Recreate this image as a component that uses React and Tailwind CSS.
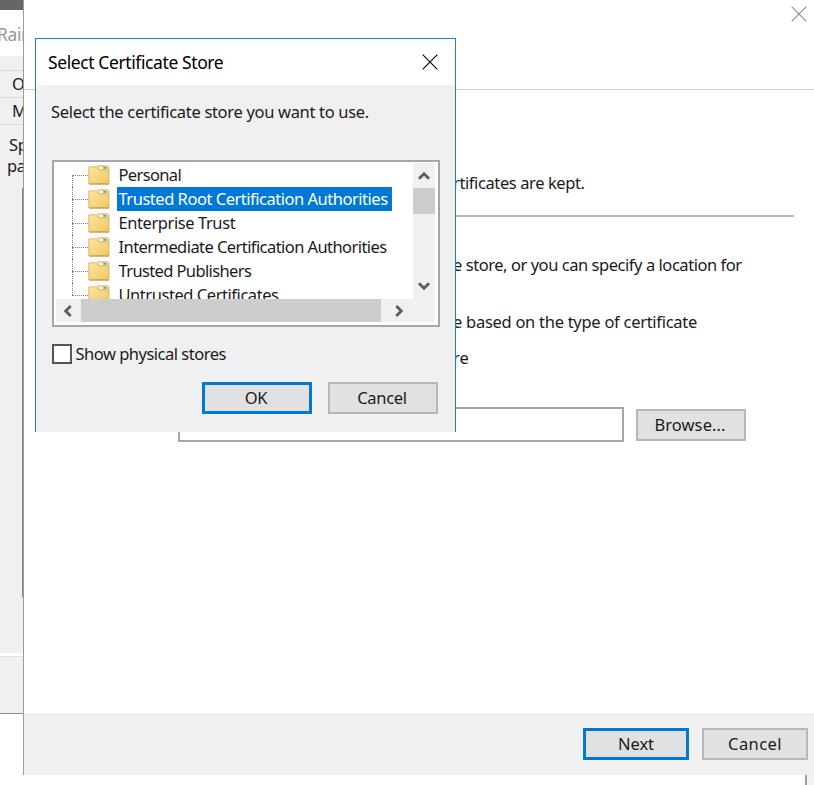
import clsx from 'clsx';

const stores = [
    { name: 'Personal', tracking: 'tracking-[-0.65px]' },
    { name: 'Trusted Root Certification Authorities', tracking: 'tracking-[-0.48px]', selected: true },
    { name: 'Enterprise Trust', tracking: 'tracking-[-0.42px]' },
    { name: 'Intermediate Certification Authorities', tracking: 'tracking-[-0.57px]' },
    { name: 'Trusted Publishers', tracking: 'tracking-[-0.62px]' },
    { name: 'Untrusted Certificates', tracking: 'tracking-[-0.45px]' },
];

const CloseIcon = ({ className }) => (
    <svg className={className} width="16" height="16" viewBox="0 0 16 16" fill="none" stroke="currentColor" strokeWidth="1.1">
        <path d="M0.7 0.7L15.3 15.3M15.3 0.7L0.7 15.3" />
    </svg>
);

const Chevron = ({ className }) => (
    <svg className={clsx('shrink-0', className)} width="12" height="12" viewBox="0 0 12 12" fill="none" stroke="#5c5c5c" strokeWidth="2.8">
        <path d="M1 8.7L6 3.7L11 8.7" />
    </svg>
);

const FolderIcon = () => (
    <svg className="shrink-0" width="22" height="20" viewBox="0 0 22 20">
        <defs>
            <linearGradient id="folder" x1="0" y1="0" x2="1" y2="1">
                <stop offset="0" stopColor="#ffe6a0" />
                <stop offset="1" stopColor="#efc665" />
            </linearGradient>
        </defs>
        <path d="M0.8 2.4Q0.8 1.8 1.4 1.8H8.8L10 0.8H19Q21 0.8 21 2.6V18.4Q21 19 20.4 19H1.4Q0.8 19 0.8 18.4Z" fill="url(#folder)" stroke="#d2ae5c" strokeWidth="0.8" />
        <path d="M12 2H19V3.8H12Z" fill="#fff" />
        <path d="M15.2 2H18.6V3.8H15.2Z" fill="#4a9bd4" />
        <path d="M8.6 2.6L11 5H20.6" fill="none" stroke="#d2ae5c" strokeWidth="0.8" />
        <path d="M1 19H21" stroke="#b98d35" strokeWidth="0.9" />
    </svg>
);

const Button = ({ children, primary, className }) => (
    <button
        className={clsx(
            'flex items-center justify-center bg-[#e1e1e1] pt-px text-[16.5px] leading-none',
            primary ? 'border-[3px] border-[#0078d7]' : 'border-2 border-[#b7b7b7]',
            className
        )}
    >
        {children}
    </button>
);

const BackWindow = () => (
    <div className="w-[23px] shrink-0 overflow-hidden whitespace-nowrap">
        <div className="h-2.5 bg-[#666666]" />
        <div className="h-[46px] bg-white pt-3 text-[17.5px] leading-6 text-[#999999]">
            <span className="-ml-[3px] tracking-[-0.4px]">Rain</span>
        </div>
        <div className="h-[15px] border-b border-[#d9d9d9] bg-[#f0f0f0]" />
        <div className="h-[27px] border-b border-[#d9d9d9] bg-[#f0f0f0] pl-3 text-[16.5px] leading-[26px]">O</div>
        <div className="h-[27px] border-b border-[#dcdcdc] bg-[#f0f0f0] pl-3 text-[16.5px] leading-[25px]">M</div>
        <div className="h-[63px] bg-[#f0f0f0] pt-[9px] text-[16.5px] leading-[22px] tracking-[-0.3px]">
            <p className="pl-[9px]">Sp</p>
            <p className="-mt-px pl-[7px]">pa</p>
        </div>
        <div className="h-[409px] border-r border-[#85858d] bg-[#f0f0f0]" />
        <div className="h-[56px] bg-[#f0f0f0]" />
        <div className="h-[3px] bg-white" />
        <div className="h-[58px] border-t border-b border-t-[#dfdfdf] border-b-[#8c8c8c] bg-[#f0f0f0]" />
    </div>
);

const Wizard = () => (
    <div className="flex flex-1 flex-col">
        <div className="flex h-[775px] flex-col border-l border-[#9b9b9b] bg-white">
            <header className="flex h-[90px] shrink-0 justify-end border-b border-[#cfcfcf] pt-[6px] pr-[7px]">
                <CloseIcon className="text-[#8a8a8a]" />
            </header>

            <main className="flex-1 pl-[429px] text-[16.5px] leading-6 whitespace-nowrap">
                <p className="mt-[81px] tracking-[-0.4px]">rtificates are kept.</p>
                <div className="mt-[19.5px] mr-5 h-[2px] bg-[#b9b9b9]" />
                <p className="mt-[36px] tracking-[-0.45px]">e store, or you can specify a location for</p>
                <p className="mt-[33px] tracking-[-0.28px]">e based on the type of certificate</p>
                <p className="mt-3 tracking-[-0.1px]">re</p>
                <div className="mt-[37px] -ml-[275px] flex gap-3">
                    <input type="text" className="h-[35px] w-[446px] border-2 border-[#a6a6a6] bg-white outline-none" />
                    <Button className="mt-[2px] h-[32px] w-[110px] pr-0.5 tracking-[0.1px]">Browse...</Button>
                </div>
            </main>

            <footer className="flex h-[61px] shrink-0 justify-end gap-[13px] border-t border-[#dfdfdf] bg-[#f0f0f0] pt-[13px] pr-[6px]">
                <Button primary className="h-[32px] w-[106px] tracking-[-0.1px]">Next</Button>
                <Button className="h-[32px] w-[106px] tracking-[0.4px]">Cancel</Button>
            </footer>
        </div>
        <div className="flex h-2.5 justify-end">
            <div className="w-[9px] border-l-2 border-[#9a9fa5] bg-[#f3f3f3]" />
        </div>
    </div>
);

const StoreList = () => (
    <div className="h-[167px] w-[388px] border-2 border-[#a3a6ac] bg-white pl-[2px]">
        <div className="flex h-[137px]">
            <ul className="w-[357px] overflow-hidden pt-px">
                {stores.map((store, i) => (
                    <li key={store.name} className="flex h-6 items-center pl-4">
                        {/* Tree lines */}
                        <div className={clsx('flex w-4 flex-col', i === 0 ? 'h-3 self-end' : 'h-6')}>
                            <div className={clsx('border-l border-dotted border-[#808080]', i === 0 ? 'h-0' : 'h-3')} />
                            <div className={clsx('flex-1 border-t border-dotted border-[#808080]', i < stores.length - 1 && 'border-l')} />
                        </div>
                        <FolderIcon />
                        <span
                            className={clsx(
                                'ml-[7px] h-6 pr-1 pl-[1.5px] text-[16.5px] leading-6 whitespace-nowrap',
                                store.tracking,
                                store.selected && 'bg-[#0078d7] text-white'
                            )}
                        >
                            {store.name}
                        </span>
                    </li>
                ))}
            </ul>
            <div className="mt-px flex w-[22px] flex-col items-center bg-[#f0f0f0]">
                <Chevron className="mt-[7px] mb-[6px]" />
                <div className="h-[26px] w-full bg-[#cdcdcd]" />
                <Chevron className="mt-auto mb-[7px] rotate-180" />
            </div>
        </div>
        <div className="flex h-[23px] w-[379px] items-center bg-[#f0f0f0]">
            <Chevron className="mr-[7px] ml-[6px] -rotate-90" />
            <div className="h-full w-[300px] bg-[#cdcdcd]" />
            <Chevron className="ml-3 rotate-90" />
        </div>
    </div>
);

const StoreDialog = () => (
    <div className="absolute top-[38px] left-[35px] h-[394px] w-[421px] border border-b-0 border-[#1a7fd0] bg-[#f0f0f0]">
        <div className="flex h-[46px] items-center justify-between bg-white pr-[17px] pl-3">
            <h1 className="text-[17.5px] leading-6 tracking-[-0.4px] text-black">Select Certificate Store</h1>
            <CloseIcon className="text-black" />
        </div>
        <div className="pl-4">
            <p className="-ml-px pt-[15px] text-[16.5px] leading-6 tracking-[-0.32px]">Select the certificate store you want to use.</p>
            <div className="mt-[36px]">
                <StoreList />
            </div>
            <label className="mt-[15px] flex items-center gap-[3.5px] text-[16.5px] leading-6 tracking-[-0.5px]">
                <span className="-mt-px h-5 w-5 border-2 border-[#555555] bg-white" />
                Show physical stores
            </label>
            <div className="mt-[16px] flex justify-end gap-4 pr-[17px]">
                <Button primary className="h-[32px] w-[110px] pr-0.5 tracking-[-0.3px]">OK</Button>
                <Button className="h-[32px] w-[110px] pr-0.5 tracking-[-0.3px]">Cancel</Button>
            </div>
        </div>
    </div>
);

const App = () => {
    return (
        <div className="relative flex h-[785px] w-[814px] overflow-hidden bg-white font-['Noto_Sans',sans-serif] text-[#1b1b1b]">
            <BackWindow />
            <Wizard />
            <StoreDialog />
        </div>
    );
};

export default App;
